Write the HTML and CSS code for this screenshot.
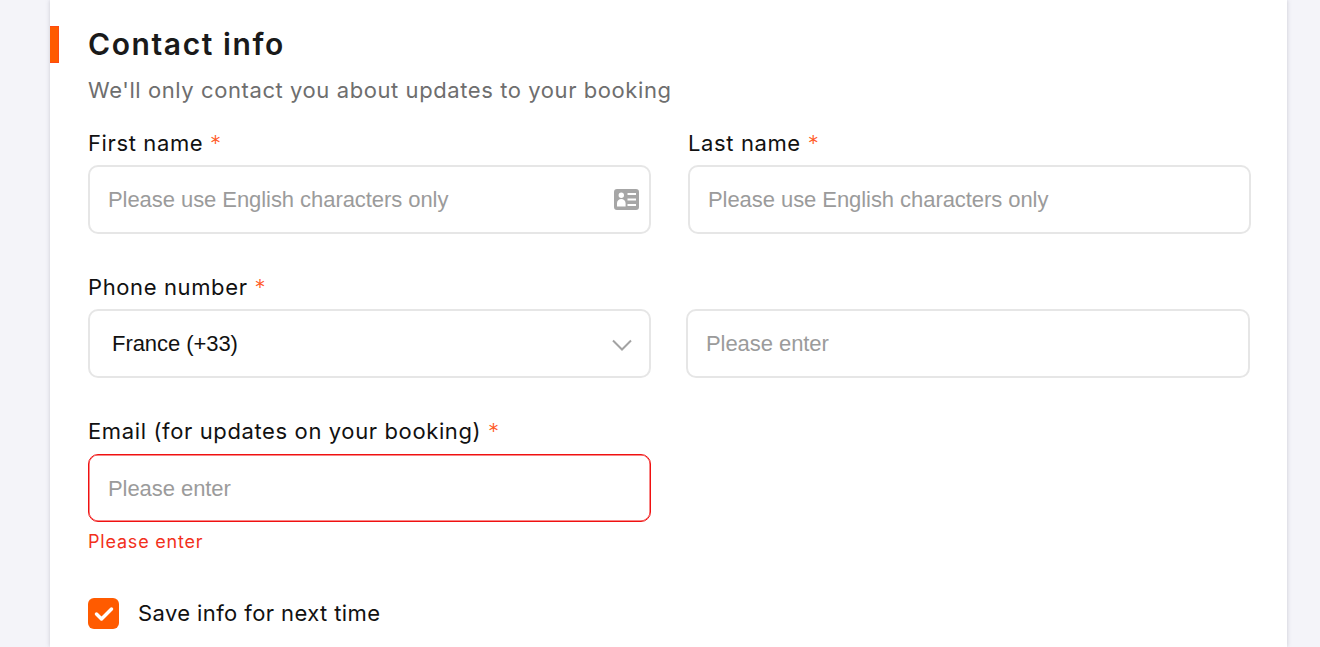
FILE: index.html
```html
<!DOCTYPE html>
<html lang="en">
<head>
<meta charset="utf-8">
<title>Contact info</title>
<link rel="stylesheet" href="styles.css">
</head>
<body>
<main class="card">
  <section class="contact">
    <span class="accent"></span>
    <h2 class="title">Contact info</h2>
    <p class="subtitle">We'll only contact you about updates to your booking</p>

    <div class="row row-name">
      <div class="field">
        <label class="label">First name <span class="req">*</span></label>
        <div class="control control-icon">
          <span class="placeholder">Please use English characters only</span>
          <svg class="id-icon" viewBox="0 0 25 21" width="25" height="21" aria-hidden="true">
            <path fill="#a6a6a6" fill-rule="evenodd" d="M3 0h19a3 3 0 0 1 3 3v15a3 3 0 0 1-3 3H3a3 3 0 0 1-3-3V3a3 3 0 0 1 3-3zM7.300 3.500a2.700 2.700 0 1 0 0 5.400 2.700 2.700 0 0 0 0-5.400zM3 17.500h8.600v-3.300c0-2.300-1.900-4.200-4.300-4.200S3 11.900 3 14.200zM13.500 4v2h8.500V4zM13.500 9.500v2h8.500v-2zM13.500 15v2h8.500v-2z"/>
          </svg>
        </div>
      </div>
      <div class="field">
        <label class="label">Last name <span class="req">*</span></label>
        <div class="control">
          <span class="placeholder">Please use English characters only</span>
        </div>
      </div>
    </div>

    <div class="row row-phone">
      <div class="field">
        <label class="label">Phone number <span class="req">*</span></label>
        <div class="control control-select">
          <span class="value">France (+33)</span>
          <svg class="chevron" viewBox="0 0 20 12" width="20" height="12" aria-hidden="true">
            <path fill="none" stroke="#a3a3a3" stroke-width="2" d="M1 1.500l9 9 9-9"/>
          </svg>
        </div>
      </div>
      <div class="field field-bare">
        <div class="control">
          <span class="placeholder">Please enter</span>
        </div>
      </div>
    </div>

    <div class="row row-email">
      <div class="field">
        <label class="label label-email">Email (for updates on your booking) <span class="req">*</span></label>
        <div class="control control-error">
          <span class="placeholder">Please enter</span>
        </div>
        <p class="error">Please enter</p>
      </div>
    </div>

    <div class="save">
      <span class="checkbox">
        <svg viewBox="0 0 20 16" width="20" height="16" aria-hidden="true">
          <path fill="none" stroke="#fff" stroke-width="3.500" stroke-linecap="round" stroke-linejoin="round" d="M2.500 8l5 5 10-10"/>
        </svg>
      </span>
      <span class="save-text">Save info for next time</span>
    </div>
  </section>
</main>
</body>
</html>
```

FILE: styles.css
```css
* { box-sizing: border-box; }
html, body { margin: 0; height: 100%; }
body {
  background: #f4f4f9;
  overflow: hidden;
  font-family: "Inter", "Liberation Sans", sans-serif;
  color: #1a1a1a;
}
.card {
  width: 1237px;
  height: 647px;
  margin-left: 50px;
  background: #fff;
  box-shadow: 0 0 4px rgba(120, 120, 140, 0.35);
  overflow: hidden;
}
.contact {
  position: relative;
  padding: 22px 36px 0 38px;
}
.accent {
  position: absolute;
  left: 0;
  top: 26px;
  width: 9px;
  height: 37px;
  background: #ff5b00;
  border: 1px solid #ff4a12;
  border-left: 0;
}
.title {
  margin: 0;
  font-size: 30px;
  line-height: 44px;
  font-weight: 600;
  letter-spacing: 1.600px;
  color: #1a1a1a;
}
.subtitle {
  margin: 3px 0 0;
  font-size: 22px;
  line-height: 42px;
  letter-spacing: 0.580px;
  color: #6e6e6e;
}
.row {
  display: grid;
  grid-template-columns: 563px 563px;
  column-gap: 37px;
  height: 144px;
}
.row-name { margin-top: 16px; }
.row-phone { grid-template-columns: 563px 564px; column-gap: 35px; }
.row-email { height: auto; }
.field-bare { padding-top: 38px; }
.label {
  display: block;
  height: 33px;
  margin-bottom: 5px;
  font-size: 22px;
  line-height: 33px;
  letter-spacing: 0.620px;
  color: #111;
}
.label-email { margin-bottom: 6px; }
.req {
  font-weight: 300;
  color: #ff5a26;
}
.control {
  display: flex;
  align-items: center;
  justify-content: space-between;
  height: 69px;
  padding: 1px 12px 0 18px;
  border: 2px solid #e6e6e6;
  border-radius: 10px;
  background: #fff;
}
.control-icon { padding-right: 10px; }
.control-select { padding: 1px 17px 0 22px; }
.control-error {
  height: 68px;
  padding-left: 19px;
  border: 1px solid #f01010;
  box-shadow: inset 0 0 0 0.500px #f01010;
}
.placeholder {
  font-family: "Liberation Sans", Arial, sans-serif;
  font-size: 22px;
  letter-spacing: -0.060px;
  color: #9b9b9b;
}
.value {
  font-family: "Liberation Sans", Arial, sans-serif;
  font-size: 22px;
  letter-spacing: -0.060px;
  color: #111;
}
.id-icon { margin-top: -1px; }
.chevron { margin-top: 1px; }
.error {
  margin: 7px 0 0;
  font-size: 18px;
  line-height: 26px;
  letter-spacing: 0.800px;
  color: #f2301c;
}
.save {
  display: flex;
  align-items: center;
  gap: 19px;
  margin-top: 43px;
}
.checkbox {
  display: flex;
  align-items: center;
  justify-content: center;
  width: 31px;
  height: 31px;
  border-radius: 6px;
  background: #ff5b00;
}
.save-text {
  font-size: 22px;
  line-height: 31px;
  letter-spacing: 0.400px;
  color: #111;
}
```
